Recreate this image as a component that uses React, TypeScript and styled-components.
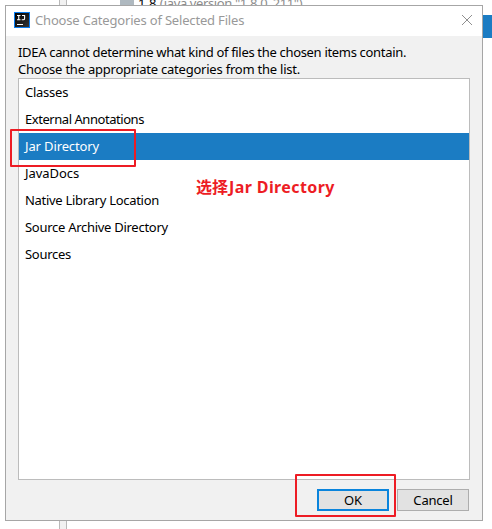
import React from "react";
import styled, { createGlobalStyle } from "styled-components";

const GlobalStyle = createGlobalStyle`
  * { box-sizing: border-box; }
  body { margin: 0; background: #fff; overflow: hidden; }
`;

const Desktop = styled.div`
  position: relative;
  width: 492px;
  height: 529px;
  padding: 5px 0 0 5px;
  overflow: hidden;
  background: #fff;
  color: #000;
  font: 13px/17px "Noto Sans", "Noto Sans CJK SC", sans-serif;
`;

const SplitterStrip = styled.div`
  position: absolute;
  top: 0;
  left: 59px;
  width: 8px;
  height: 529px;
  background: #f1f1f1;
  border: solid #b9b9b9;
  border-width: 0 1px;
`;

const SdkEntry = styled.div`
  position: absolute;
  top: -6px;
  left: 120px;
  display: flex;
  gap: 4px;
  line-height: 18px;
  letter-spacing: -0.38px;
  white-space: pre;
  color: #8c8c8c;
`;

const SdkIcon = styled.span`
  width: 14px;
  height: 12px;
  background: #afb9c0;
`;

const SdkVersion = styled.span`
  color: #000;
  letter-spacing: 0;
`;

const BackgroundSelection = styled.div`
  position: absolute;
  top: 15px;
  left: 482px;
  width: 10px;
  height: 23px;
  background: #1b7cc3;
`;

const Dialog = styled.section`
  position: relative;
  display: flex;
  flex-direction: column;
  width: 478px;
  height: 516px;
  border: 1px solid #a6a6a6;
  background: #f1f1f1;
`;

const TitleBar = styled.header`
  display: flex;
  align-items: center;
  height: 30px;
  padding: 0 9px 0 8px;
  background: #fff;
  color: #999;
  line-height: 19px;

  > span { margin-top: -2px; }
`;

const AppIcon = styled.svg`
  width: 16px;
  height: 16px;
  margin: -2px 5px 0 0;
`;

const CloseIcon = styled.svg`
  width: 12px;
  height: 12px;
  margin: -2px 0 0 auto;
`;

const Text = styled.span<{ $spacing?: number }>`
  letter-spacing: ${({ $spacing = 0 }) => $spacing}px;
  white-space: pre;
`;

const Message = styled.div`
  display: flex;
  flex-direction: column;
  height: 42px;
  padding: 8px 0 0 12px;
`;

const CategoryList = styled.div`
  height: 402px;
  width: 452px;
  margin-left: 12px;
  border: 1px solid #bcbcbc;
  background: #fff;
`;

const CategoryRow = styled.div<{ $selected?: boolean }>`
  display: flex;
  align-items: center;
  height: 27px;
  padding: 0 0 0 6px;
  background: ${({ $selected }) => ($selected ? "#1b7cc3" : "transparent")};
  color: ${({ $selected }) => ($selected ? "#fff" : "#000")};
`;

const Actions = styled.footer`
  display: flex;
  justify-content: flex-end;
  gap: 8px;
  padding: 9px 13px 0 0;
`;

const Button = styled.button<{ $primary?: boolean }>`
  display: flex;
  align-items: center;
  justify-content: center;
  width: 72px;
  height: 22px;
  padding: 0;
  border: ${({ $primary }) => ($primary ? "2px solid #0a84dc" : "1px solid #adadad")};
  background: #e2e2e2;
  color: #000;
  font: inherit;
`;

const Highlight = styled.div<{ $x: number; $y: number; $w: number; $h: number }>`
  position: absolute;
  left: ${({ $x }) => $x}px;
  top: ${({ $y }) => $y}px;
  width: ${({ $w }) => $w}px;
  height: ${({ $h }) => $h}px;
  border: 2px solid #ed1c24;
  border-radius: 1px;
`;

const Note = styled.div`
  position: absolute;
  left: 196px;
  top: 177px;
  display: flex;
  color: #ed1c24;
  font: bold 16px/20px "Noto Sans", "Noto Sans CJK SC", sans-serif;
  white-space: nowrap;
`;

const NoteLatin = styled.span`
  padding-left: 1px;
  letter-spacing: 0.4px;
`;

const categories = [
  { name: "Classes", spacing: -0.25 },
  { name: "External Annotations", spacing: -0.45 },
  { name: "Jar Directory", spacing: -0.13 },
  { name: "JavaDocs", spacing: -0.05 },
  { name: "Native Library Location", spacing: -0.29 },
  { name: "Source Archive Directory", spacing: -0.28 },
  { name: "Sources", spacing: -0.28 },
];

export default function App() {
  return (
    <>
      <GlobalStyle />
      <Desktop>
        <SplitterStrip />
        <SdkEntry>
          <SdkIcon />
          <span><SdkVersion>1.8 </SdkVersion>(java version "1.8.0_211")</span>
        </SdkEntry>
        <BackgroundSelection />
        <Dialog>
          <TitleBar>
            <AppIcon viewBox="0 0 16 16">
              <defs>
                <linearGradient id="face" x1="0" y1="0" x2="1" y2="1">
                  <stop offset="0" stopColor="#000" />
                  <stop offset="1" stopColor="#343434" />
                </linearGradient>
              </defs>
              <rect width="16" height="16" fill="#087cf0" />
              <rect x="1" y="1" width="14" height="14" fill="url(#face)" />
              <path d="M3 3.5h3.5M4.75 3.5v4.5M3 7.8h3.5M8 3.5h2.6v3q0 1.3-1.3 1.3H7.7M3 12.5h6" fill="none" stroke="#fff" strokeWidth="1.1" />
            </AppIcon>
            <Text $spacing={-0.18}>Choose Categories of Selected Files</Text>
            <CloseIcon viewBox="0 0 12 12">
              <path d="M1 1l10 10M11 1L1 11" stroke="#8f8f8f" strokeWidth="1" />
            </CloseIcon>
          </TitleBar>
          <Message>
            <Text $spacing={-0.32}>IDEA cannot determine what kind of files the chosen items contain.</Text>
            <Text $spacing={-0.22}>Choose the appropriate categories from the list.</Text>
          </Message>
          <CategoryList>
            {categories.map(({ name, spacing }) => (
              <CategoryRow key={name} $selected={name === "Jar Directory"}>
                <Text $spacing={spacing}>{name}</Text>
              </CategoryRow>
            ))}
          </CategoryList>
          <Actions>
            <Button $primary><Text>OK</Text></Button>
            <Button><Text $spacing={-0.2}>Cancel</Text></Button>
          </Actions>
        </Dialog>
        <Highlight $x={10} $y={129} $w={126} $h={38} />
        <Highlight $x={295} $y={474} $w={101} $h={43} />
        <Note><span>选择</span><NoteLatin>Jar Directory</NoteLatin></Note>
      </Desktop>
    </>
  );
}
